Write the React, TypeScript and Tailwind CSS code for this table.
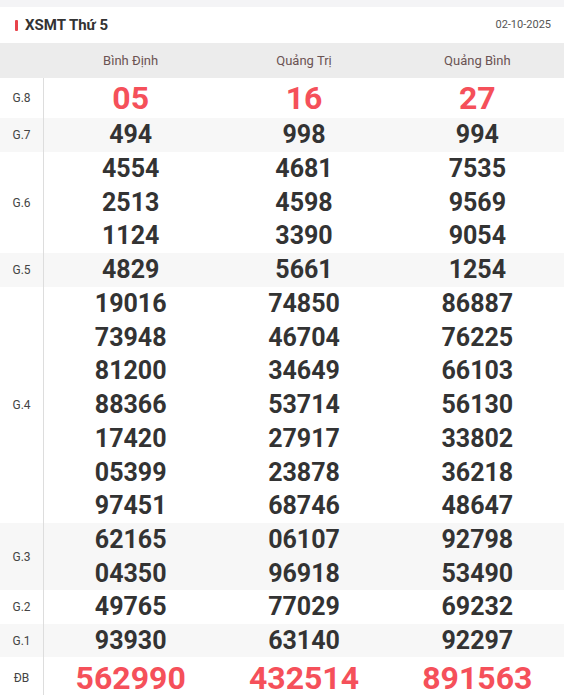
const provinces = ['Bình Định', 'Quảng Trị', 'Quảng Bình'];

type Row = { label: string; nums: string[][]; red?: boolean; h: string; stripe?: boolean };

const rows: Row[] = [
  { label: 'G.8', nums: [['05'], ['16'], ['27']], red: true, h: 'h-[40px]' },
  { label: 'G.7', nums: [['494'], ['998'], ['994']], h: 'h-[34px]', stripe: true },
  {
    label: 'G.6',
    nums: [
      ['4554', '2513', '1124'],
      ['4681', '4598', '3390'],
      ['7535', '9569', '9054'],
    ],
    h: 'h-[101px]',
  },
  { label: 'G.5', nums: [['4829'], ['5661'], ['1254']], h: 'h-[34px]', stripe: true },
  {
    label: 'G.4',
    nums: [
      ['19016', '73948', '81200', '88366', '17420', '05399', '97451'],
      ['74850', '46704', '34649', '53714', '27917', '23878', '68746'],
      ['86887', '76225', '66103', '56130', '33802', '36218', '48647'],
    ],
    h: 'h-[236px]',
  },
  {
    label: 'G.3',
    nums: [
      ['62165', '04350'],
      ['06107', '96918'],
      ['92798', '53490'],
    ],
    h: 'h-[67px]',
    stripe: true,
  },
  { label: 'G.2', nums: [['49765'], ['77029'], ['69232']], h: 'h-[34px]' },
  { label: 'G.1', nums: [['93930'], ['63140'], ['92297']], h: 'h-[33px]', stripe: true },
  { label: 'ĐB', nums: [['562990'], ['432514'], ['891563']], red: true, h: 'h-[42px]' },
];

export default function App() {
  return (
    <div className="w-[564px] bg-[#f4f4f6] pt-[7px] font-['Roboto',sans-serif]">
      {/* header */}
      <div className="flex h-[36px] items-center justify-between bg-white pl-[15px] pr-[13px]">
        <div className="flex items-center gap-[7px]">
          <span className="h-[11px] w-[3px] rounded-[1px] bg-[#e8434b]" />
          <span className="text-[15px] font-bold text-[#333]">XSMT Thứ 5</span>
        </div>
        <span className="text-[11px] text-[#555]">02-10-2025</span>
      </div>

      {/* table */}
      <div className="bg-white">
        <div className="flex h-[35px] items-center bg-[#ececec] text-[13px] text-[#6b5353]">
          <div className="w-[44px]" />
          {provinces.map((p) => (
            <div key={p} className="flex-1 text-center">
              {p}
            </div>
          ))}
        </div>

        {rows.map((r) => (
          <div key={r.label} className={`flex ${r.h} ${r.stripe ? 'bg-[#f7f7f7]' : 'bg-white'}`}>
            <div className="flex w-[44px] items-center justify-center border-r border-[#ddd] text-[12px] text-[#444]">
              {r.label}
            </div>
            {r.nums.map((col, i) => (
              <div key={i} className="flex flex-1 flex-col items-center justify-center">
                {col.map((n) => (
                  <div
                    key={n}
                    className={
                      r.red
                        ? 'text-[32px] font-bold leading-[40px] text-[#f5505a]'
                        : 'text-[25px] font-bold leading-[33.7px] text-[#333]'
                    }
                  >
                    {n}
                  </div>
                ))}
              </div>
            ))}
          </div>
        ))}
      </div>
    </div>
  );
}
